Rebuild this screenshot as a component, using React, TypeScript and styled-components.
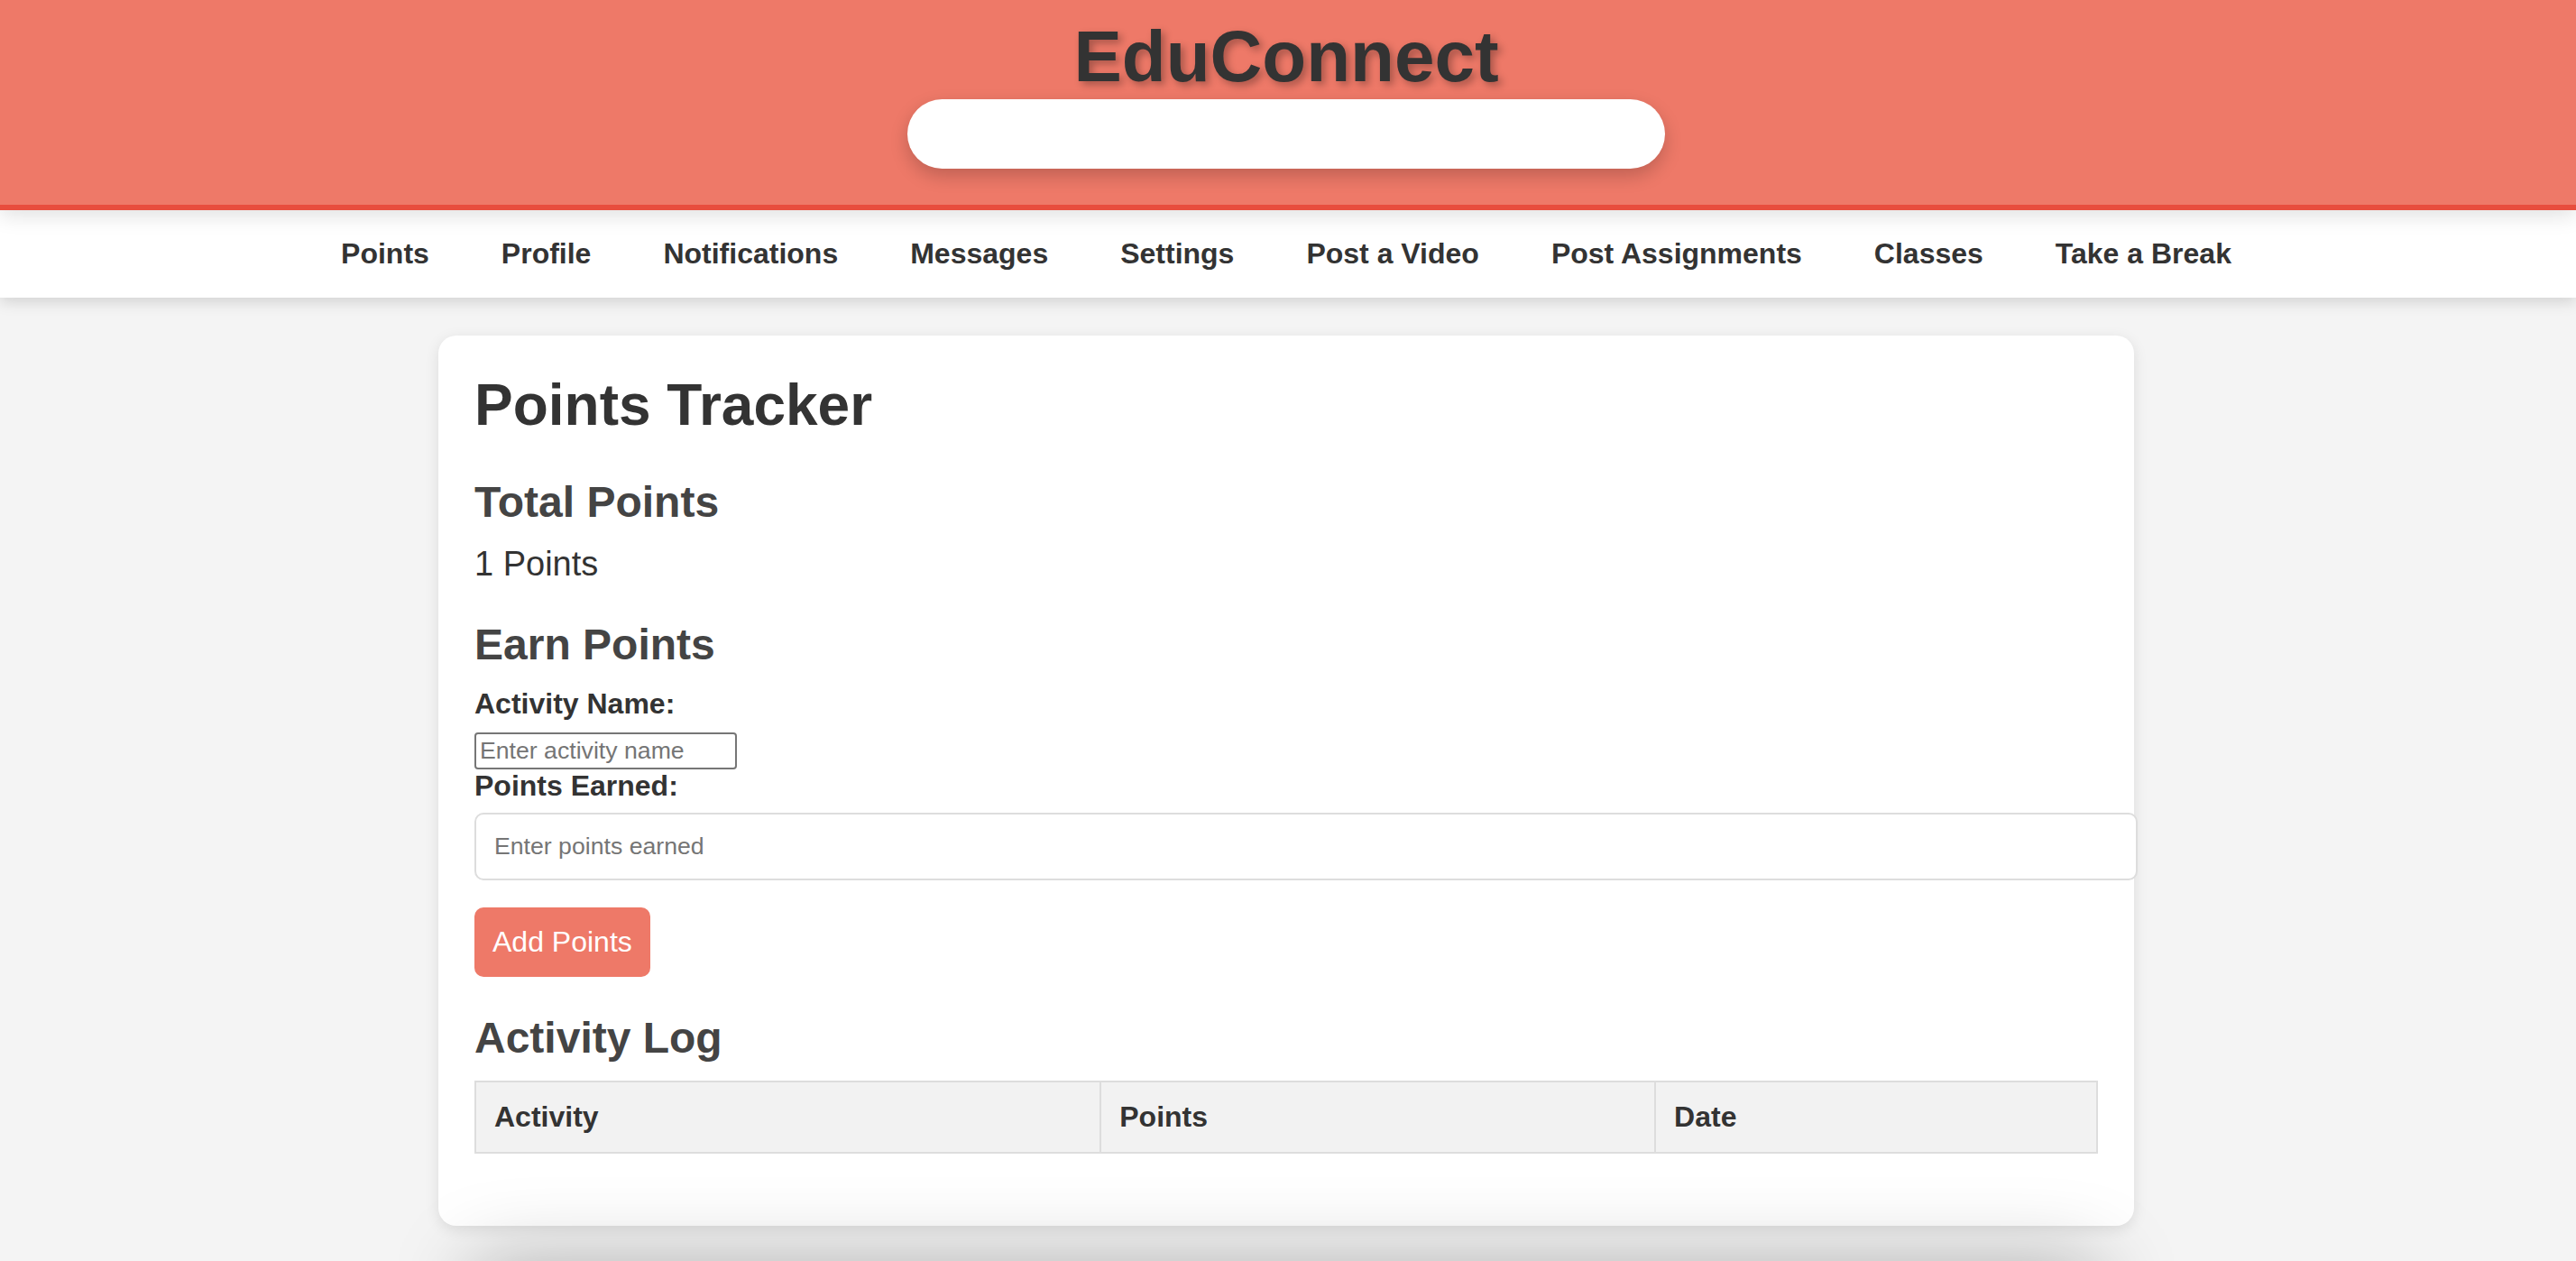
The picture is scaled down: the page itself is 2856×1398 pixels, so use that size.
import React, { useState } from 'react'
import styled, { createGlobalStyle } from 'styled-components'

const CORAL = '#ee7968'
const TEXT = '#333'

const GlobalStyle = createGlobalStyle`
  html, body {
    margin: 0;
    padding: 0;
    background: #f4f4f4;
    font-family: "Liberation Sans", Arial, Helvetica, sans-serif;
    color: ${TEXT};
  }
`

const Page = styled.div`
  height: 100vh;
  overflow: hidden;
`

const Header = styled.header`
  position: relative;
  z-index: 2;
  background: ${CORAL};
  border-bottom: 6px solid #e84d3d;
  padding: 17px 4px 40px 0;
  display: flex;
  flex-direction: column;
  align-items: center;
  box-shadow: 0 6px 22px rgba(0, 0, 0, 0.12);
`

const Logo = styled.h1`
  margin: 0;
  font-size: 80px;
  font-weight: bold;
  color: ${TEXT};
  text-shadow: 4px 4px 8px rgba(0, 0, 0, 0.3);
`

const Search = styled.input`
  box-sizing: border-box;
  width: 840px;
  height: 77px;
  margin-top: 1px;
  padding: 0 40px;
  border: none;
  border-radius: 50px;
  background: #fff;
  font-size: 32px;
  font-family: inherit;
  outline: none;
  box-shadow: 0 8px 20px rgba(0, 0, 0, 0.2);
`

const Nav = styled.nav`
  position: relative;
  z-index: 1;
  background: #fff;
  padding: 30px 4px 30px 0;
  display: flex;
  justify-content: center;
  gap: 80px;
  box-shadow: 0 4px 16px rgba(0, 0, 0, 0.15);
`

const NavLink = styled.a`
  font-size: 32px;
  font-weight: bold;
  color: ${TEXT};
  text-decoration: none;
  cursor: pointer;
`

const Content = styled.div`
  padding-right: 4px;
`

const Card = styled.main`
  max-width: 1800px;
  margin: 42px auto 0;
  padding: 40px;
  background: #fff;
  border-radius: 20px;
  box-shadow: 0 4px 16px rgba(0, 0, 0, 0.1);
`

const Title = styled.h1`
  margin: 0 0 43px;
  font-size: 64px;
  color: ${TEXT};
`

const Heading = styled.h2`
  margin: 40px 0 20px;
  font-size: 48px;
  color: #444;
`

const Total = styled.p`
  margin: 20px 0;
  font-size: 38px;
  color: ${TEXT};
`

const Label = styled.label`
  display: block;
  font-size: 32px;
  font-weight: bold;
  color: ${TEXT};
`

const PlainInput = styled.input`
  display: block;
  box-sizing: border-box;
  width: 291px;
  height: 41px;
  margin-top: 13px;
  padding: 2px 4px;
  border: 2px solid #767676;
  border-radius: 4px;
  font-family: inherit;
  font-size: 26.67px;
  &::placeholder {
    color: #757575;
  }
`

const WideInput = styled.input`
  display: block;
  width: 100%;
  margin: 11px 0 30px;
  padding: 20px;
  border: 2px solid #ddd;
  border-radius: 10px;
  font-family: inherit;
  font-size: 26.67px;
  &::placeholder {
    color: #757575;
  }
`

const Button = styled.button`
  display: block;
  padding: 20px;
  border: none;
  border-radius: 10px;
  background: ${CORAL};
  color: #fff;
  font-family: inherit;
  font-size: 32px;
  cursor: pointer;
`

const Table = styled.table`
  width: 100%;
  margin: 20px 0 40px;
  border-collapse: collapse;
`

const Th = styled.th`
  padding: 20px;
  border: 2px solid #ddd;
  background: #f2f2f2;
  text-align: left;
  font-size: 32px;
  color: ${TEXT};
`

const Footer = styled.footer`
  max-width: 1800px;
  height: 120px;
  margin: 40px auto 0;
  box-shadow: 0 0 90px rgba(0, 0, 0, 0.28);
`

const links = [
  'Points',
  'Profile',
  'Notifications',
  'Messages',
  'Settings',
  'Post a Video',
  'Post Assignments',
  'Classes',
  'Take a Break'
]

const App = () => {
  const [points] = useState(1)
  const [activity, setActivity] = useState('')
  const [earned, setEarned] = useState('')

  return (
    <Page>
      <GlobalStyle />
      <Header>
        <Logo>EduConnect</Logo>
        <Search type="text" />
      </Header>
      <Nav>
        {links.map((item) => (
          <NavLink key={item}>{item}</NavLink>
        ))}
      </Nav>
      <Content>
        <Card>
          <Title>Points Tracker</Title>
          <Heading>Total Points</Heading>
          <Total>{points} Points</Total>
          <Heading>Earn Points</Heading>
          <Label htmlFor="activity">Activity Name:</Label>
          <PlainInput
            id="activity"
            placeholder="Enter activity name"
            value={activity}
            onChange={(e) => setActivity(e.target.value)}
          />
          <Label htmlFor="earned">Points Earned:</Label>
          <WideInput
            id="earned"
            type="number"
            placeholder="Enter points earned"
            value={earned}
            onChange={(e) => setEarned(e.target.value)}
          />
          <Button>Add Points</Button>
          <Heading>Activity Log</Heading>
          <Table>
            <thead>
              <tr>
                <Th>Activity</Th>
                <Th>Points</Th>
                <Th>Date</Th>
              </tr>
            </thead>
          </Table>
        </Card>
        <Footer />
      </Content>
    </Page>
  )
}

export default App
